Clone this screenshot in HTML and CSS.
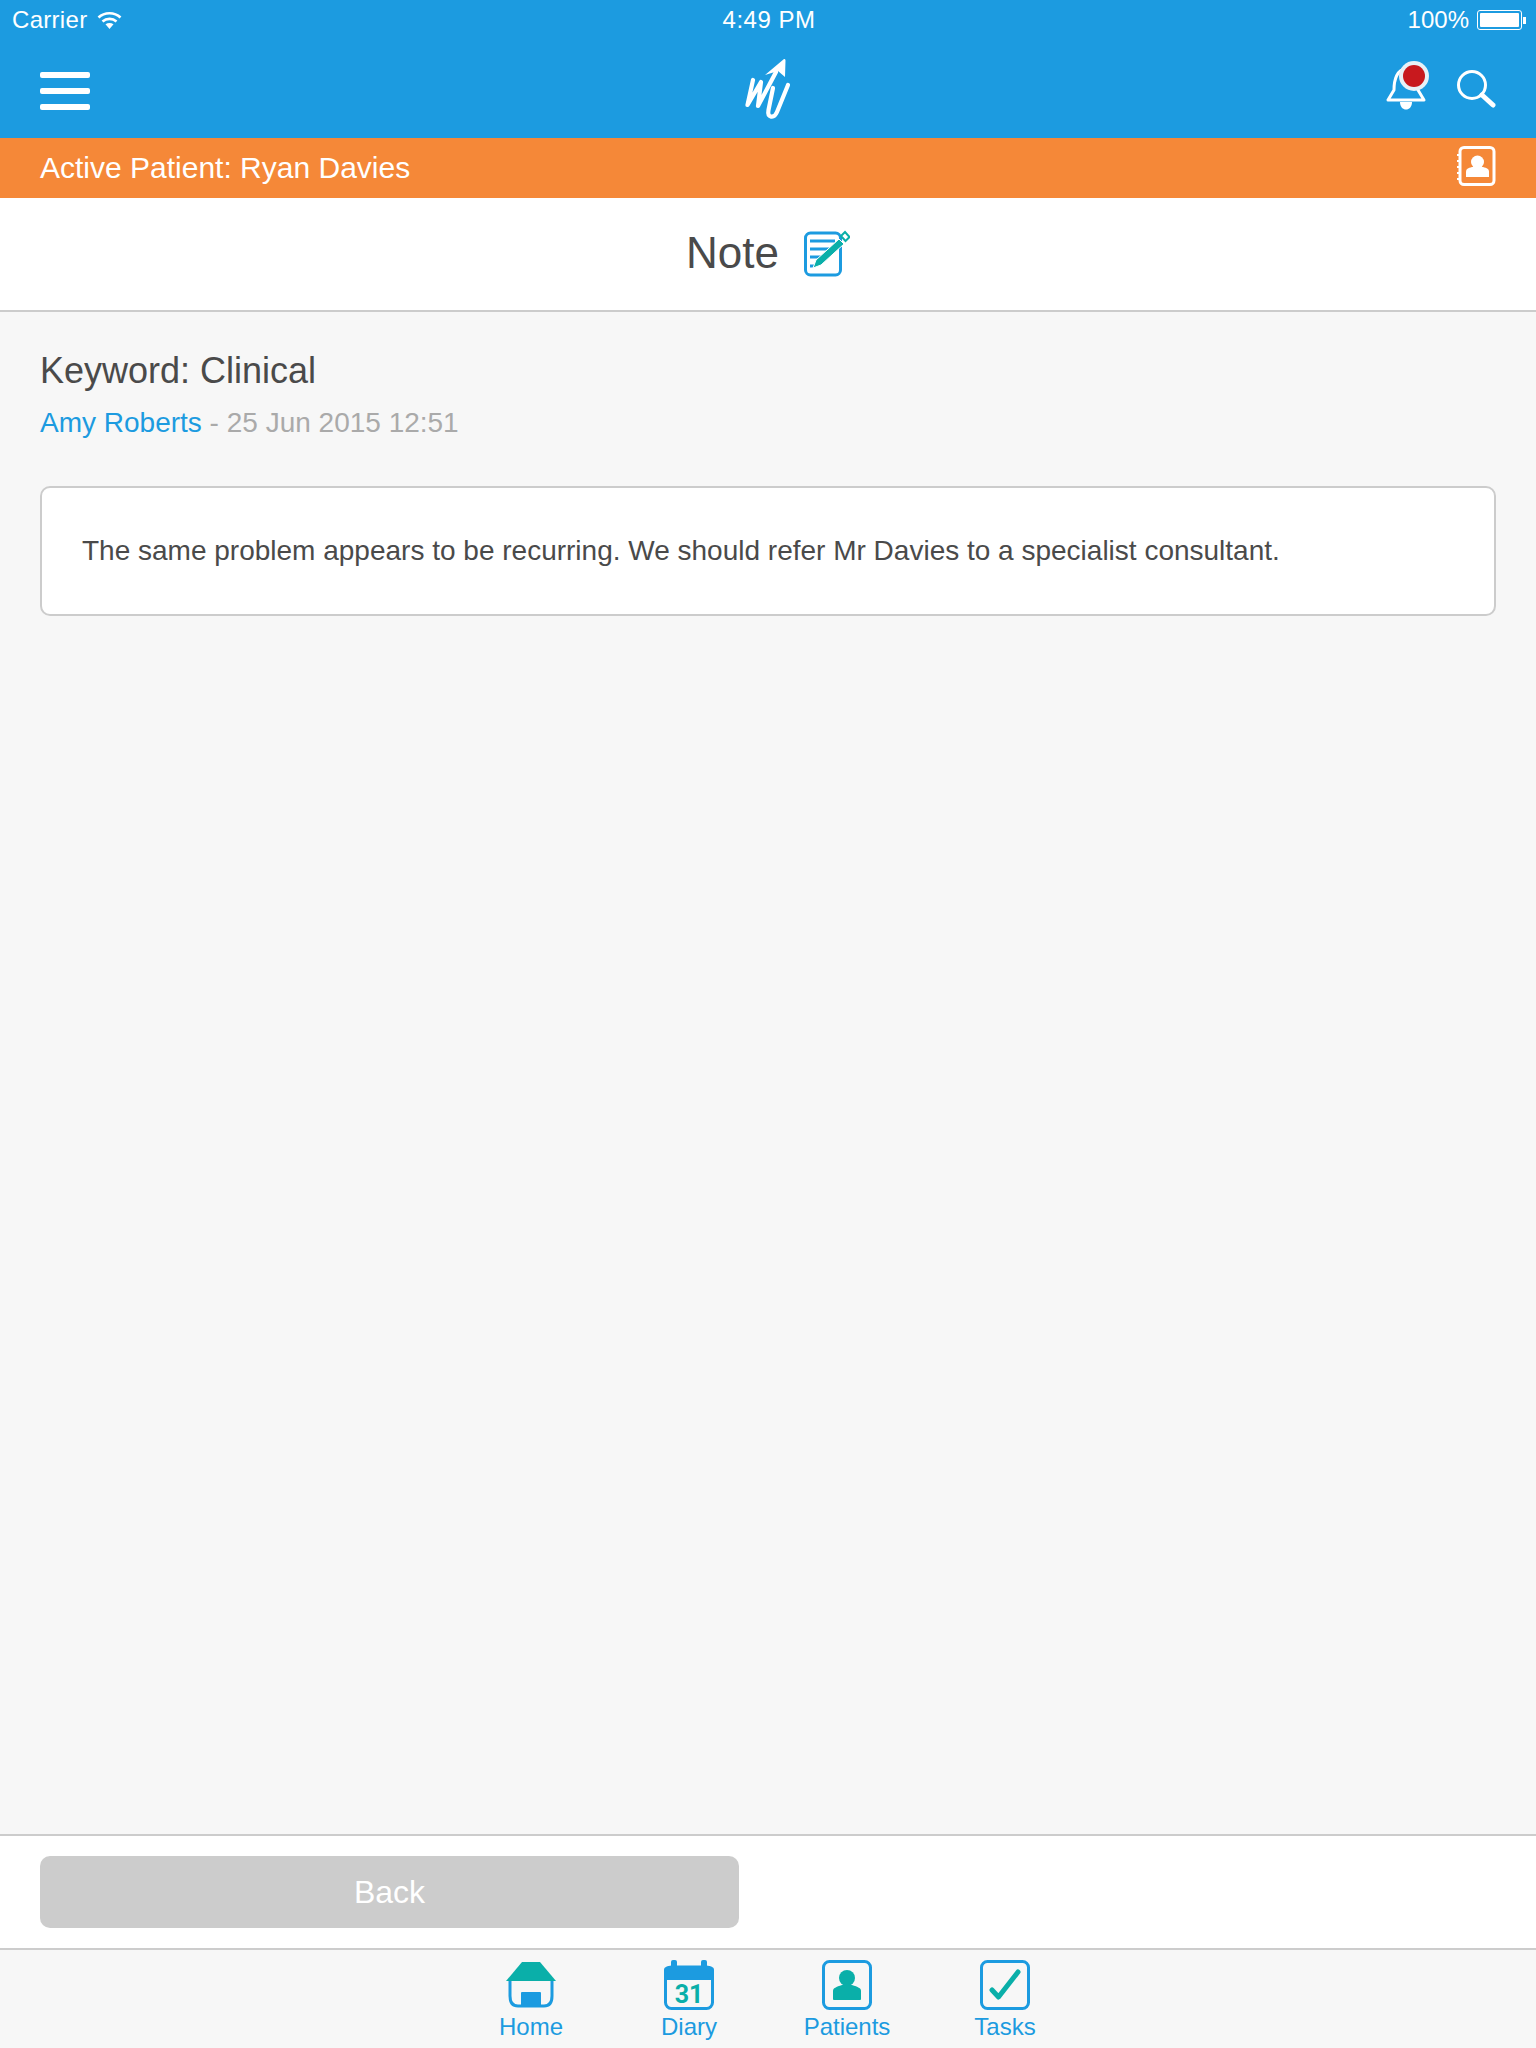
FILE: index.html
```html
<!DOCTYPE html>
<html lang="en">
<head>
    <meta charset="UTF-8">
    <title>Note</title>
    <link rel="stylesheet" href="styles.css">
</head>
<body>
    <div class="page">
        <div class="top">
            <div class="status">
                <div class="status-left">
                    <span class="carrier">Carrier</span>
                    <svg class="wifi" viewBox="0 0 25 18" width="25" height="18">
                        <path d="M1.5 6.5C7.5 .8 17.5 .8 23.5 6.5" fill="none" stroke="#fff" stroke-width="2.6"/>
                        <path d="M5.5 10.5C9.5 7 15.5 7 19.5 10.5" fill="none" stroke="#fff" stroke-width="2.6"/>
                        <path d="M8.5 13.3C11 11.4 14 11.4 16.5 13.3L12.5 18Z" fill="#fff"/>
                    </svg>
                </div>
                <div class="status-time">4:49 PM</div>
                <div class="status-right">
                    <span>100%</span>
                    <div class="battery"><div class="battery-fill"></div></div>
                    <div class="battery-nub"></div>
                </div>
            </div>
            <div class="header">
                <div class="menu-icon">
                    <div class="menu-line"></div>
                    <div class="menu-line"></div>
                    <div class="menu-line"></div>
                </div>
                <svg class="logo" viewBox="0 0 46 62" width="46" height="62">
                    <path d="M8 22L2.500 47L16 24L13 48L31 14" fill="none" stroke="#fff" stroke-width="4.200" stroke-linecap="round" stroke-linejoin="round"/>
                    <path d="M28 30L23.500 52C22 60 29 61 32 54L43 27" fill="none" stroke="#fff" stroke-width="4.200" stroke-linecap="round" stroke-linejoin="round"/>
                    <path d="M20 17L39 1C40 1 40.500 1.500 40.500 2.500L40 19L33 13Z" fill="#fff"/>
                </svg>
                <div class="header-right">
                    <svg class="bell" viewBox="0 0 46 52" width="46" height="52">
                        <path d="M9 30C9 20 12 9 21 9C30 9 33 20 33 30L39 40H3Z" fill="none" stroke="#fff" stroke-width="3" stroke-linejoin="round"/>
                        <path d="M15 42H27C27 52 15 52 15 42Z" fill="#fff"/>
                        <circle cx="29" cy="16" r="15" fill="#e8f1f7"/>
                        <circle cx="29" cy="16" r="11" fill="#c8191e"/>
                    </svg>
                    <svg class="search" viewBox="0 0 40 40" width="40" height="40">
                        <circle cx="16" cy="16" r="13.500" fill="none" stroke="#fff" stroke-width="3"/>
                        <path d="M26 26L37 36" fill="none" stroke="#fff" stroke-width="5" stroke-linecap="round"/>
                    </svg>
                </div>
            </div>
        </div>
        <div class="patient-bar">
            <span>Active Patient: Ryan Davies</span>
            <svg class="contact" viewBox="0 0 40 40" width="40" height="40">
                <rect x="4" y="1.500" width="34" height="37" rx="4" fill="none" stroke="#fff" stroke-width="3"/>
                <path d="M1 9H5M1 15H5M1 21H5M1 27H5M1 33H5" stroke="#fff" stroke-width="2"/>
                <circle cx="21.500" cy="16" r="6.500" fill="#fff"/>
                <path d="M10 26C10 23 12 22 16 21H27C31 22 33 23 33 26V31H10Z" fill="#fff"/>
            </svg>
        </div>
        <div class="title-bar">
            <span class="title">Note</span>
            <svg class="note-icon" viewBox="0 0 46 47" width="46" height="47">
                <rect x="1.500" y="3" width="35" height="42" rx="5" fill="#fff" stroke="#1c9be0" stroke-width="3"/>
                <path d="M6 11H31M6 19H26M6 27H20M6 36H10" stroke="#1c9be0" stroke-width="3"/>
                <path d="M9 38L12 30L35 9L40 14L17 35Z" fill="#0aafa9" stroke="#fff" stroke-width="1"/>
                <path d="M37 6L41 2L45.500 7L41.500 11Z" fill="#fff" stroke="#0aafa9" stroke-width="2"/>
            </svg>
        </div>
        <div class="content">
            <p class="keyword">Keyword: Clinical</p>
            <p class="meta"><span class="author">Amy Roberts</span> - 25 Jun 2015 12:51</p>
            <div class="note-card">The same problem appears to be recurring. We should refer Mr Davies to a specialist consultant.</div>
        </div>
        <div class="actions">
            <div class="back-btn">Back</div>
        </div>
        <div class="tabs">
            <div class="tab">
                <svg class="tab-icon" viewBox="0 0 50 50" width="50" height="50">
                    <path d="M4 20V36C4 43 7 46 12 46H38C43 46 46 43 46 36V20" fill="none" stroke="#1c9be0" stroke-width="3"/>
                    <path d="M16 2H34L50 21H0Z" fill="#0aafa9"/>
                    <rect x="15" y="32" width="20" height="14" rx="1" fill="#1c9be0"/>
                </svg>
                <span class="tab-label">Home</span>
            </div>
            <div class="tab">
                <svg class="tab-icon" viewBox="0 0 50 50" width="50" height="50">
                    <rect x="1.500" y="7" width="47" height="41.500" rx="6" fill="none" stroke="#1c9be0" stroke-width="3"/>
                    <path d="M0 20V10C0 7 3 6 6 6H44C47 6 50 7 50 10V20Z" fill="#1c9be0"/>
                    <rect x="7" y="0" width="6" height="10" rx="2" fill="#1c9be0"/>
                    <rect x="37" y="0" width="6" height="10" rx="2" fill="#1c9be0"/>
                    <text class="cal-day" x="25" y="43" text-anchor="middle">31</text>
                </svg>
                <span class="tab-label">Diary</span>
            </div>
            <div class="tab">
                <svg class="tab-icon" viewBox="0 0 50 50" width="50" height="50">
                    <rect x="1.500" y="1.500" width="47" height="47" rx="6" fill="none" stroke="#1c9be0" stroke-width="3"/>
                    <circle cx="25" cy="18" r="8" fill="#0aafa9"/>
                    <path d="M11 31C11 28 14 27 20 25H30C36 27 39 28 39 31V39C39 39.500 38.500 40 38 40H12C11.500 40 11 39.500 11 39Z" fill="#0aafa9"/>
                </svg>
                <span class="tab-label">Patients</span>
            </div>
            <div class="tab">
                <svg class="tab-icon" viewBox="0 0 50 50" width="50" height="50">
                    <rect x="1.500" y="1.500" width="47" height="47" rx="6" fill="none" stroke="#1c9be0" stroke-width="3"/>
                    <path d="M12 30L18.500 37L38 12" fill="none" stroke="#0aafa9" stroke-width="5" stroke-linecap="round" stroke-linejoin="round"/>
                </svg>
                <span class="tab-label">Tasks</span>
            </div>
        </div>
    </div>
</body>
</html>
```

FILE: styles.css
```css
body {
    font-family: "Liberation Sans", Arial, sans-serif;
    background-color: #f7f7f7;
    color: #4a4a4a;
    margin: 0;
}

.page {
    height: 2048px;
    display: flex;
    flex-direction: column;
    overflow: hidden;
}

/* blue top area */
.top {
    height: 138px;
    background-color: #1c9be0;
    color: #fff;
}

.status {
    height: 40px;
    padding: 0 10px 0 12px;
    display: grid;
    grid-template-columns: 1fr auto 1fr;
    align-items: center;
    font-size: 24px;
}

.status-left {
    display: flex;
    align-items: center;
    gap: 10px;
}

.carrier {
    letter-spacing: 0.3px;
}

.status-time {
    letter-spacing: 0.5px;
}

.status-right {
    display: flex;
    align-items: center;
    justify-content: flex-end;
}

.battery {
    width: 45px;
    height: 20px;
    margin-left: 8px;
    box-sizing: border-box;
    border: 1px solid #fff;
    border-radius: 3px;
    padding: 2px;
}

.battery-fill {
    height: 100%;
    background-color: #fff;
    border-radius: 1px;
}

.battery-nub {
    width: 3px;
    height: 7px;
    margin-left: 1px;
    background-color: #fff;
}

.header {
    height: 98px;
    padding: 0 40px;
    display: grid;
    grid-template-columns: 1fr auto 1fr;
    align-items: center;
}

.menu-icon {
    display: flex;
    flex-direction: column;
    gap: 10px;
    margin-top: 4px;
}

.menu-line {
    width: 50px;
    height: 6px;
    background-color: #fff;
    border-radius: 2px;
}

.header-right {
    display: flex;
    justify-content: flex-end;
    align-items: center;
    gap: 25px;
}

.bell {
    margin-bottom: 6px;
}

/* patient bar */
.patient-bar {
    height: 60px;
    padding: 0 40px;
    background-color: #f58838;
    color: #fff;
    font-size: 30px;
    display: flex;
    align-items: center;
    justify-content: space-between;
}

.contact {
    margin-bottom: 4px;
}

.title-bar {
    height: 112px;
    background-color: #fff;
    border-bottom: 2px solid #ccc;
    display: flex;
    align-items: center;
    justify-content: center;
    gap: 25px;
}

.title {
    font-size: 44px;
    margin-bottom: 2px;
}

.note-icon {
    margin-bottom: 2px;
}

.content {
    flex: 1;
    padding: 38px 40px 0 40px;
}

.keyword {
    font-size: 36px;
    margin: 0;
}

.meta {
    font-size: 28px;
    color: #aaa;
    margin: 15px 0 0 0;
}

.author {
    color: #1c9be0;
}

.note-card {
    margin-top: 47px;
    height: 130px;
    box-sizing: border-box;
    padding: 0 40px;
    background-color: #fff;
    border: 2px solid #ccc;
    border-radius: 10px;
    font-size: 28px;
    display: flex;
    align-items: center;
}

/* bottom buttons */
.actions {
    height: 114px;
    padding: 20px 40px;
    box-sizing: border-box;
    background-color: #fff;
    border-top: 2px solid #ccc;
}

.back-btn {
    width: 699px;
    height: 72px;
    background-color: #ccc;
    color: #fff;
    font-size: 32px;
    border-radius: 10px;
    display: flex;
    align-items: center;
    justify-content: center;
}

.tabs {
    height: 100px;
    box-sizing: border-box;
    border-top: 2px solid #ccc;
    padding: 10px 0 0 0;
    display: flex;
    justify-content: center;
}

.tab {
    width: 158px;
    display: flex;
    flex-direction: column;
    align-items: center;
    color: #1c9be0;
    font-size: 24px;
}

.tab-label {
    margin-top: 3px;
}

.cal-day {
    font-family: Roboto, sans-serif;
    font-size: 25px;
    font-weight: 700;
    fill: #0aafa9;
}
```
